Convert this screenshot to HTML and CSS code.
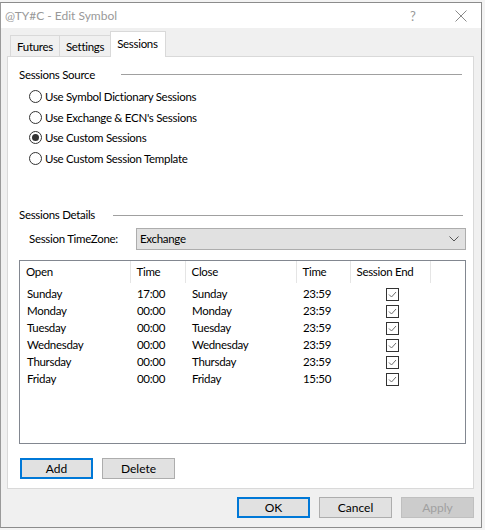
FILE: index.html
```html
<!DOCTYPE html>
<html lang="en">
<head>
  <meta charset="UTF-8">
  <title>@TY#C - Edit Symbol</title>
  <link rel="stylesheet" href="styles.css">
</head>
<body>

  <div class="window">
    <div class="titlebar">
      <span class="title">@TY#C - Edit Symbol</span>
      <span class="help">?</span>
      <span class="close">
        <svg width="12" height="12" viewBox="0 0 12 12"><path d="M0.5 0.5 L11.5 11.5 M11.5 0.5 L0.5 11.5" stroke="#8a8a8a" stroke-width="1" fill="none"/></svg>
      </span>
    </div>

    <div class="client">
      <div class="tabs">
        <div class="tab">Futures</div>
        <div class="tab">Settings</div>
        <div class="tab active">Sessions</div>
      </div>

      <div class="panel">
        <div class="group-title"><span>Sessions Source</span><div class="rule"></div></div>
        <div class="radios">
          <label class="radio"><span class="dot"></span>Use Symbol Dictionary Sessions</label>
          <label class="radio"><span class="dot"></span>Use Exchange &amp; ECN's Sessions</label>
          <label class="radio checked"><span class="dot"></span>Use Custom Sessions</label>
          <label class="radio"><span class="dot"></span>Use Custom Session Template</label>
        </div>

        <div class="group-title details"><span>Sessions Details</span><div class="rule"></div></div>
        <div class="tz-row">
          <span class="tz-label">Session TimeZone:</span>
          <div class="combo">
            <span>Exchange</span>
            <svg width="10" height="6" viewBox="0 0 10 6"><path d="M0.5 0.5 L5 5 L9.5 0.5" stroke="#555" stroke-width="1" fill="none"/></svg>
          </div>
        </div>

        <div class="listbox">
          <table class="sessions">
            <thead>
              <tr>
                <th class="c-open">Open</th>
                <th class="c-time">Time</th>
                <th class="c-close">Close</th>
                <th class="c-time2">Time</th>
                <th class="c-end">Session End</th>
                <th class="c-rest"></th>
              </tr>
            </thead>
            <tbody id="rows"></tbody>
          </table>
        </div>

        <div class="list-buttons">
          <button class="btn default">Add</button>
          <button class="btn">Delete</button>
        </div>
      </div>

      <div class="footer">
        <button class="btn default">OK</button>
        <button class="btn">Cancel</button>
        <button class="btn disabled">Apply</button>
      </div>
    </div>
  </div>

  <script>
    // session rows
    const sessions = [
      ['Sunday', '17:00', 'Sunday', '23:59'],
      ['Monday', '00:00', 'Monday', '23:59'],
      ['Tuesday', '00:00', 'Tuesday', '23:59'],
      ['Wednesday', '00:00', 'Wednesday', '23:59'],
      ['Thursday', '00:00', 'Thursday', '23:59'],
      ['Friday', '00:00', 'Friday', '15:50']
    ];
    const tbody = document.getElementById('rows');
    sessions.forEach(function(s) {
      const tr = document.createElement('tr');
      tr.innerHTML =
        '<td>' + s[0] + '</td><td>' + s[1] + '</td><td>' + s[2] + '</td><td>' + s[3] + '</td>' +
        '<td class="chk"><span class="box"><svg width="11" height="11" viewBox="0 0 11 11"><path d="M2 5.5 L4.5 8 L9 3" stroke="#6d6d6d" stroke-width="1" fill="none"/></svg></span></td><td></td>';
      tbody.appendChild(tr);
    });
  </script>

</body>
</html>
```

FILE: styles.css
```css
html, body, * {
  font-family: 'Lato', 'Open Sans', Arial, sans-serif;
}
body {
  margin: 0;
  background-color: #f3f3f3;
  font-size: 11.5px;
  letter-spacing: -0.3px;
  color: #000;
}
.window {
  margin-top: 2px;
  width: 480px;
  height: 524px;
  border: 1px solid #8c8c8c;
  border-left-color: #9a9a9a;
  background-color: #f0f0f0;
  display: flex;
  flex-direction: column;
}
.titlebar {
  height: 25px;
  background-color: white;
  display: flex;
  align-items: center;
  padding-left: 4px;
  color: #999;
  font-size: 12px;
  letter-spacing: 0;
}
.title {
  flex: 1;
}
.help {
  width: 14px;
  margin-right: 31px;
  font-size: 13px;
}
.close {
  width: 12px;
  margin-right: 14px;
  display: flex;
}
.client {
  flex: 1;
  display: flex;
  flex-direction: column;
  padding: 0 7px 0 6px;
}
.tabs {
  height: 28px;
  display: flex;
  align-items: flex-end;
  padding-left: 3px;
}
.tab {
  height: 20px;
  padding: 0 6px;
  border: 1px solid #d9d9d9;
  border-bottom: none;
  background-color: #f0f0f0;
  margin-right: -1px;
  display: flex;
  align-items: center;
}
.tab.active {
  height: 23px;
  background-color: white;
  padding: 0 7px 2px 6px;
  position: relative;
  top: 1px;
}
.panel {
  height: 433px;
  background-color: white;
  border: 1px solid #d9d9d9;
  padding: 9px 7px 0 11px;
  box-sizing: border-box;
}
.group-title {
  display: flex;
  align-items: center;
  height: 16px;
}
.group-title .rule {
  flex: 1;
  border-top: 1px solid #a0a0a0;
  margin: 1px 4px 0 26px;
}
.group-title.details {
  margin-top: 38px;
}
.group-title.details .rule {
  margin-left: 18px;
  margin-right: 3px;
}
.radios {
  margin-top: 4px;
  padding-left: 10px;
}
.radio {
  display: flex;
  align-items: center;
  height: 20.7px;
}
.dot {
  width: 11px;
  height: 11px;
  border: 1px solid #333;
  border-radius: 50%;
  margin-right: 3px;
  display: flex;
  align-items: center;
  justify-content: center;
}
.radio.checked .dot::after {
  content: "";
  width: 7px;
  height: 7px;
  border-radius: 50%;
  background-color: #333;
}
.tz-row {
  display: flex;
  align-items: center;
  margin-top: 5px;
  padding-left: 10px;
}
.tz-label {
  width: 107px;
}
.combo {
  flex: 1;
  height: 20px;
  background-color: #e1e1e1;
  border: 1px solid #adadad;
  display: flex;
  align-items: center;
  justify-content: space-between;
  padding: 0 6px 0 3px;
}
.listbox {
  height: 182px;
  margin-top: 10px;
  border: 1px solid #828790;
  background-color: white;
}
.sessions {
  border-collapse: collapse;
  table-layout: fixed;
  width: 100%;
}
.sessions th {
  box-sizing: border-box;
  font-weight: normal;
  text-align: left;
  height: 22px;
  padding: 0 6px;
  border-right: 1px solid #e5e5e5;
  white-space: nowrap;
}
.sessions th.c-rest {
  border-right: none;
}
.c-open { width: 110px; }
.c-time { width: 55px; }
.c-close { width: 111px; }
.c-time2 { width: 54px; }
.c-end { width: 80px; }
.sessions td {
  height: 17px;
  padding: 0 7px;
  white-space: nowrap;
}
.sessions tbody tr:first-child td {
  padding-top: 2px;
}
.sessions td.chk {
  text-align: center;
  padding-left: 5px;
  padding-right: 0;
}
.box {
  display: inline-flex;
  width: 11px;
  height: 11px;
  border: 1px solid #333;
  vertical-align: middle;
}
.list-buttons {
  display: flex;
  gap: 9px;
  margin-top: 14px;
  padding-left: 1px;
}
.btn {
  width: 73px;
  height: 21px;
  background-color: #e1e1e1;
  border: 1px solid #adadad;
  font-size: 12px;
  padding: 0;
  color: #000;
}
.btn.default {
  border: 2px solid #0078d7;
}
.btn.disabled {
  background-color: #cccccc;
  border-color: #bfbfbf;
  color: #a0a0a0;
}
.footer {
  display: flex;
  justify-content: flex-end;
  gap: 9px;
  margin-top: 8px;
  padding-right: 0;
}
```
